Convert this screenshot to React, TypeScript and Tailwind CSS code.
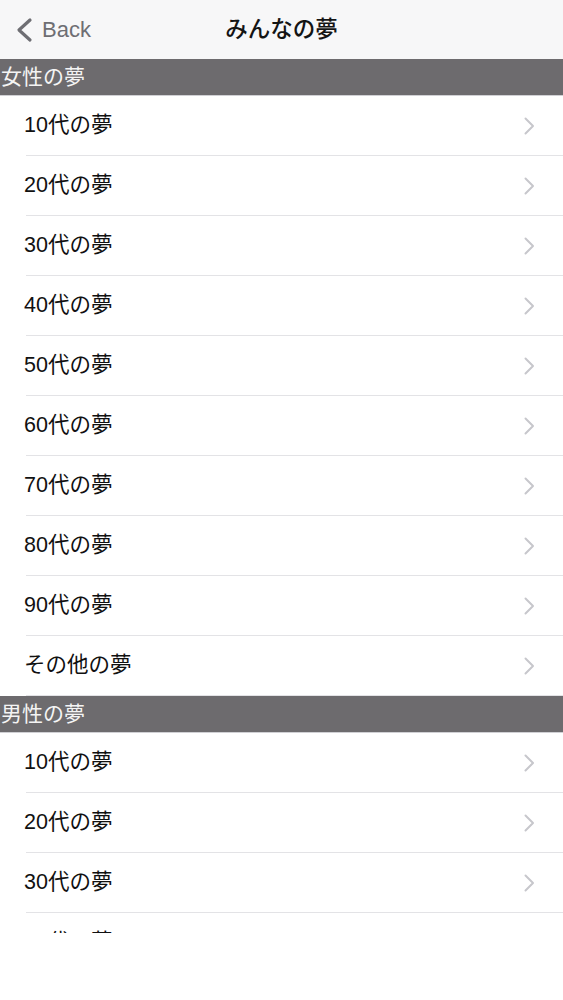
const FONT = "font-['Liberation_Sans','Noto_Sans_CJK_JP',sans-serif]";

const ages = ["10代の夢", "20代の夢", "30代の夢", "40代の夢", "50代の夢", "60代の夢", "70代の夢", "80代の夢", "90代の夢", "その他の夢"];

const sections = [
  { title: "女性の夢", rows: ages },
  { title: "男性の夢", rows: ages },
];

function Chevron() {
  return (
    <svg width="11" height="18" viewBox="0 0 11 18" fill="none" className="shrink-0">
      <polyline points="1.5,1.5 9,9 1.5,16.5" stroke="#c7c7cc" strokeWidth="2" strokeLinecap="round" strokeLinejoin="round" />
    </svg>
  );
}

function Row({ label }: { label: string }) {
  return (
    <li className="flex h-[60px] items-center pl-[26px]">
      <div className="flex h-full flex-1 items-center justify-between border-b border-[#e3e3e6] pr-[28px]">
        <span className="-ml-[2px] text-[21.5px] text-[#111111]">{label}</span>
        <Chevron />
      </div>
    </li>
  );
}

export default function App() {
  return (
    <div className={`${FONT} flex h-[1000px] w-[563px] flex-col bg-white`}>
      <header className="relative flex h-[59px] shrink-0 items-center justify-center bg-[#f7f7f8]">
        <button className="absolute left-[15px] top-[17px] flex items-center gap-[9px] text-[#6e6e73]">
          <svg width="18" height="26" viewBox="0 0 18 26" fill="none">
            <polyline points="15,3 4,13 15,23" stroke="#6e6e73" strokeWidth="3.2" strokeLinecap="round" strokeLinejoin="round" />
          </svg>
          <span className="text-[22px] leading-none">Back</span>
        </button>
        <h1 className="pt-[1px] text-[22.5px] font-medium text-[#141414]">みんなの夢</h1>
      </header>

      <div className="h-[874px] shrink-0 overflow-hidden">
        {sections.map((s) => (
          <section key={s.title}>
            <div className="flex h-[37px] items-center border-b border-[#d0d0d4] bg-[#6d6b6e] pl-[1px] text-[21px] text-[#f4f4f4]">
              {s.title}
            </div>
            <ul>
              {s.rows.map((r) => (
                <Row key={r} label={r} />
              ))}
            </ul>
          </section>
        ))}
      </div>
    </div>
  );
}
